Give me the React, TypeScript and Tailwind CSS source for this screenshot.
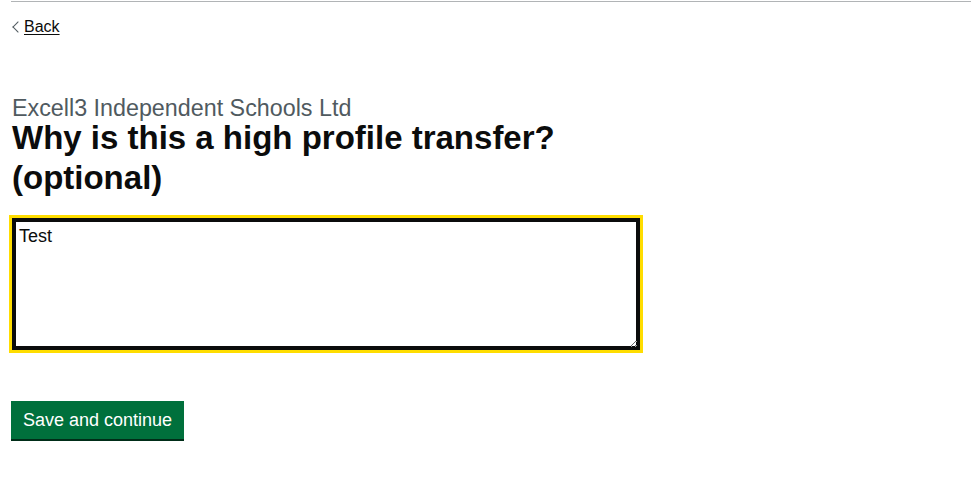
import React from "react";

export default function App() {
  return (
    <div className="min-h-[503px] bg-white font-['Liberation_Sans',Arial,sans-serif] text-[#0b0c0c]">
      {/* Header rule */}
      <div className="ml-[11px] pt-px">
        <div className="border-t border-[#b1b4b6]" />
      </div>

      <div className="pl-3">
        {/* Back link */}
        <a
          href="#"
          className="mt-[15px] inline-flex items-center text-[16px] leading-[20px] text-[#0b0c0c] underline underline-offset-[2px] decoration-1"
        >
          <span className="mr-[2.5px] ml-[1.5px] inline-block h-[8px] w-[8px] -rotate-45 border-l border-t border-[#505a5f]" />
          Back
        </a>

        <main className="mt-[60px] w-[628px]">
          <span className="block text-[23.3px] leading-[20px] text-[#505a5f]">
            Excell3 Independent Schools Ltd
          </span>
          <h1 className="mb-[20px] text-[33px] font-bold leading-[40px]">
            Why is this a high profile transfer? (optional)
          </h1>

          <textarea
            rows={5}
            defaultValue="Test"
            className="block h-[132px] w-[628px] border-2 border-[#0b0c0c] bg-white px-[5px] py-[5px] text-[18px] leading-[1.25] text-[#0b0c0c] shadow-[inset_0_0_0_2px_#0b0c0c] outline-[3px] outline-[#ffdd00] outline-solid"
          />

          <button className="mt-[51px] -ml-px block border-2 border-transparent bg-[#00703c] px-[10px] pt-[8px] pb-[7px] text-[18px] leading-[19px] text-white shadow-[0_2px_0_#002d18]">
            Save and continue
          </button>
        </main>
      </div>
    </div>
  );
}
